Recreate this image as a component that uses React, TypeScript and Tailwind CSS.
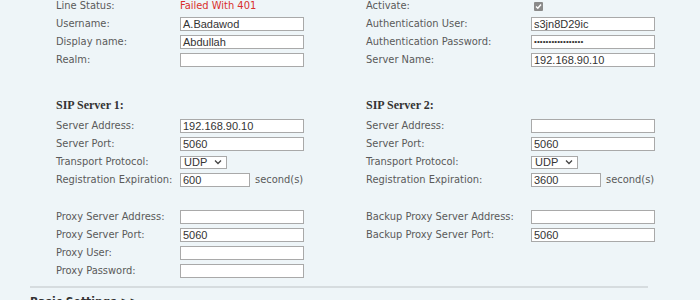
import React from "react";

const labelFont: React.CSSProperties = { fontFamily: '"DejaVu Sans Condensed", "DejaVu Sans", Verdana, sans-serif', fontStretch: "condensed" };
const inputFont = { fontFamily: '"Liberation Sans", Arial, sans-serif' };
const serif = { fontFamily: '"Liberation Serif", Georgia, serif' };

function Box({ value, w = "w-[124px]", pwd = false }: { value?: string; w?: string; pwd?: boolean }) {
  return (
    <div
      className={`${w} h-[14px] border border-[#a9a9a9] bg-white pl-[2px] text-[11px] leading-[12px] text-[#333] overflow-hidden whitespace-nowrap`}
      style={inputFont}
    >
      {pwd ? <span className="text-[8px] tracking-[0.1px] align-top leading-[12px]">{value}</span> : value}
    </div>
  );
}

function Select() {
  return (
    <div className="w-[47px] h-[13px] border border-[#a9a9a9] bg-white flex items-center pl-[3px] pr-[4px] justify-between text-[11px] leading-[11px] text-[#333]" style={inputFont}>
      <span>UDP</span>
      <svg width="8" height="6" viewBox="0 0 8 6"><path d="M1 1.5 L4 4.5 L7 1.5" fill="none" stroke="#444" strokeWidth="1.3" /></svg>
    </div>
  );
}

function Row({ label, lw, children }: { label: string; lw: string; children: React.ReactNode }) {
  return (
    <div className="flex items-center h-[18px]">
      <div className={`${lw} text-[11px] text-[#5a5a5a] whitespace-nowrap`} style={labelFont}>{label}</div>
      <div className="flex items-center">{children}</div>
    </div>
  );
}

function Checked() {
  return (
    <div className="ml-[3px] w-[9px] h-[9px] rounded-[1px] bg-[#8a8a8a] flex items-center justify-center">
      <svg width="7" height="7" viewBox="0 0 7 7"><path d="M1 3.6 L2.8 5.3 L6 1.5" fill="none" stroke="#fff" strokeWidth="1.4" /></svg>
    </div>
  );
}

export default function App() {
  const L = "w-[124px]";
  const R = "w-[165px]";
  const secondStyle = "ml-[5px] text-[11px] text-[#5a5a5a]";
  return (
    <div className="w-[700px] h-[300px] bg-[#eef5f8] overflow-hidden">
      <div className="mt-[-3px] flex">
        <div className="ml-[56px] w-[310px]">
          <Row label="Line Status:" lw={L}>
            <span className="text-[11px] text-[#d9302c]" style={labelFont}>Failed With 401</span>
          </Row>
          <Row label="Username:" lw={L}><Box value="A.Badawod" /></Row>
          <Row label="Display name:" lw={L}><Box value="Abdullah" /></Row>
          <Row label="Realm:" lw={L}><Box /></Row>
        </div>
        <div className="w-[334px]">
          <Row label="Activate:" lw={R}><Checked /></Row>
          <Row label="Authentication User:" lw={R}><Box value="s3jn8D29ic" /></Row>
          <Row label="Authentication Password:" lw={R}><Box value="•••••••••••••••••" pwd /></Row>
          <Row label="Server Name:" lw={R}><Box value="192.168.90.10" /></Row>
        </div>
      </div>

      <div className="mt-[27px] flex">
        <div className="ml-[56px] w-[310px]">
          <div className="h-[18px] flex items-center text-[12px] font-bold text-[#333]" style={serif}>SIP Server 1:</div>
          <div className="mt-[3px]">
            <Row label="Server Address:" lw={L}><Box value="192.168.90.10" /></Row>
            <Row label="Server Port:" lw={L}><Box value="5060" /></Row>
            <Row label="Transport Protocol:" lw={L}><Select /></Row>
            <Row label="Registration Expiration:" lw={L}>
              <Box value="600" w="w-[70px]" />
              <span className={secondStyle} style={labelFont}>second(s)</span>
            </Row>
          </div>
        </div>
        <div className="w-[334px]">
          <div className="h-[18px] flex items-center text-[12px] font-bold text-[#333]" style={serif}>SIP Server 2:</div>
          <div className="mt-[3px]">
            <Row label="Server Address:" lw={R}><Box /></Row>
            <Row label="Server Port:" lw={R}><Box value="5060" /></Row>
            <Row label="Transport Protocol:" lw={R}><Select /></Row>
            <Row label="Registration Expiration:" lw={R}>
              <Box value="3600" w="w-[70px]" />
              <span className={secondStyle} style={labelFont}>second(s)</span>
            </Row>
          </div>
        </div>
      </div>

      <div className="mt-[19px] flex">
        <div className="ml-[56px] w-[310px]">
          <Row label="Proxy Server Address:" lw={L}><Box /></Row>
          <Row label="Proxy Server Port:" lw={L}><Box value="5060" /></Row>
          <Row label="Proxy User:" lw={L}><Box /></Row>
          <Row label="Proxy Password:" lw={L}><Box /></Row>
        </div>
        <div className="w-[334px]">
          <Row label="Backup Proxy Server Address:" lw={R}><Box /></Row>
          <Row label="Backup Proxy Server Port:" lw={R}><Box value="5060" /></Row>
        </div>
      </div>

      <div className="mt-[6px] ml-[30px] w-[618px] h-[2px] bg-[#d6dcdf]" />
      <div className="mt-[7px] ml-[30px] text-[12px] font-bold text-[#333] leading-[14px]" style={labelFont}>
        Basic Settings &gt;&gt;
      </div>
    </div>
  );
}
